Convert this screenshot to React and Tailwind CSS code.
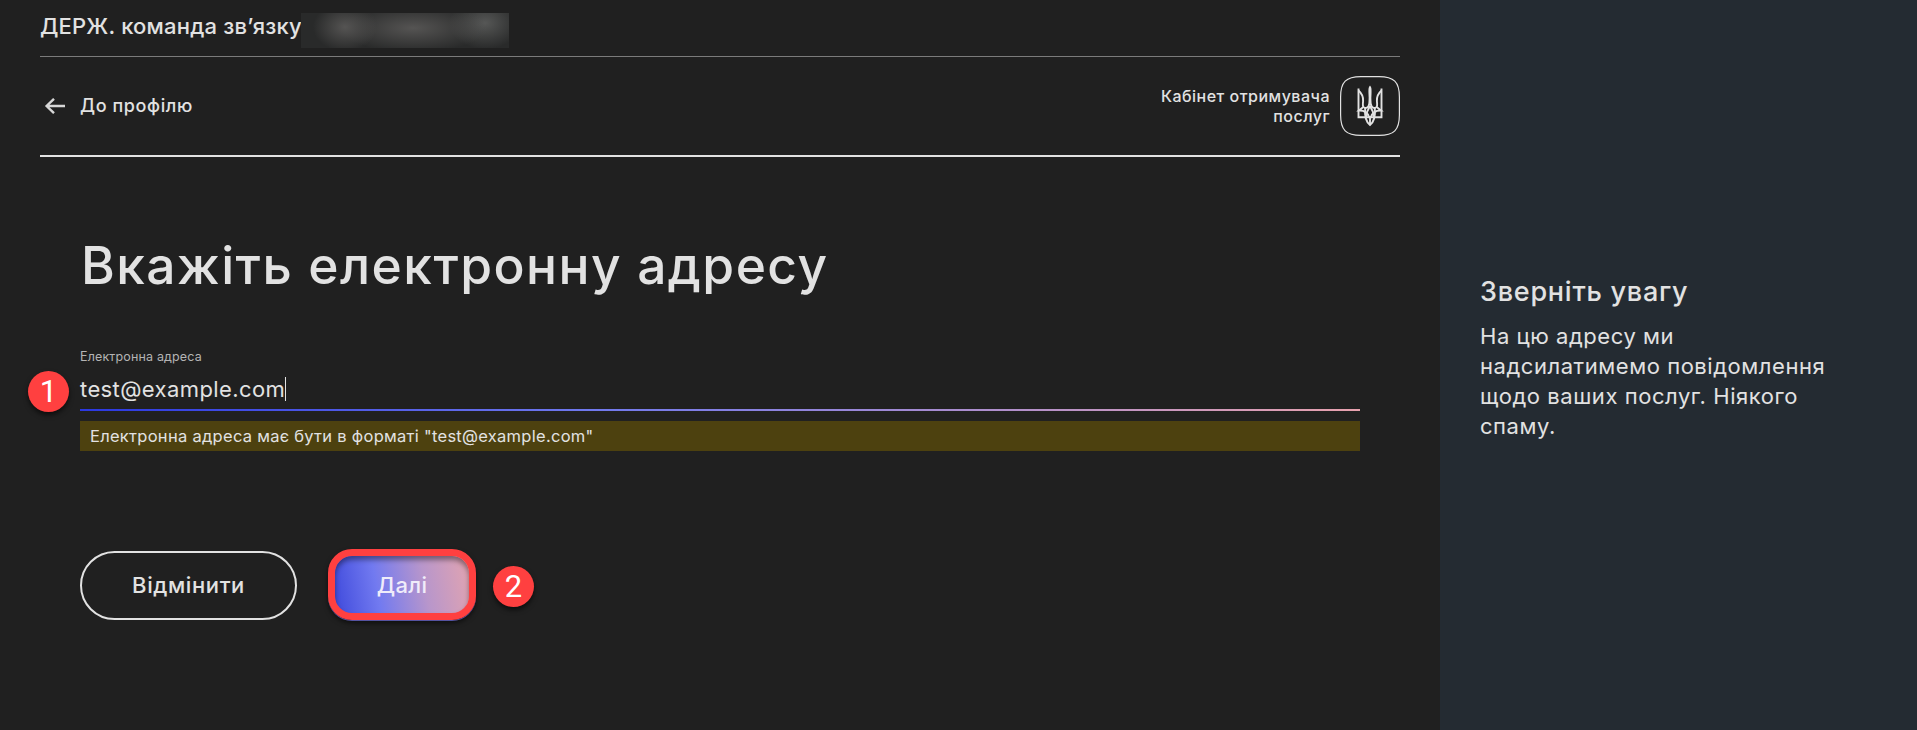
function Badge({ children, className }) {
  return (
    <span className={`flex size-[41px] items-center justify-center rounded-full bg-[#ff4040] font-[Roboto,sans-serif] text-[31px] leading-none tracking-normal text-white shadow-[0px_3px_5px_rgba(0,0,0,0.6)] ${className}`}>
      {children}
    </span>
  );
}

function Trident() {
  return (
    <svg viewBox="0 0 60 60" className="size-[60px]" fill="none" stroke="#e2e2e2">
      <path d="M21 .6H39C54 .6 59.4 6 59.4 21V39C59.4 54 54 59.4 39 59.4H21C6 59.4 .6 54 .6 39V21C.6 6 6 .6 21 .6Z" strokeWidth="1.200" />
      <g strokeWidth="1.900">
        <path d="M18.500 12.500V41.200H41.500V12.500" />
        <path d="M18.500 14.500C22.500 18 23.300 21 23.100 25C23 28 22.200 29.500 23.500 31C24.800 32.500 27.500 32.300 28.600 30C29.600 28 29.700 25 29.900 22" />
        <path d="M41.500 14.500C37.500 18 36.700 21 36.900 25C37 28 37.800 29.500 36.500 31C35.200 32.500 32.500 32.300 31.400 30C30.400 28 30.300 25 30.100 22" />
        <path d="M23.300 31L19 34.500C24 34.300 27.500 36.500 29 41M36.700 31L41 34.500C36 34.300 32.500 36.500 31 41" />
        <path d="M25.200 32C24.500 40 25.500 45.500 30 49C34.500 45.500 35.500 40 34.800 32" />
        <path d="M30 30C27.500 34 26.300 37 26 41M30 30C32.500 34 33.700 37 34 41M30 40V49" />
      </g>
      <path d="M30 9.500C31.800 11 31.600 14 31.500 18L31.100 27H28.900L28.500 18C28.400 14 28.200 11 30 9.500Z" fill="#e2e2e2" stroke="none" />
    </svg>
  );
}

export default function App() {
  return (
    <div className="flex h-[730px] w-[1917px] overflow-hidden bg-[#202020] font-[Inter,sans-serif] text-[#e2e2e2]">
      <main className="flex w-[1440px] flex-col px-10">
        <header className="flex h-[57px] items-start border-b border-[#7b7b7b] pt-[13px]">
          <span className="w-[261px] whitespace-nowrap text-[22px] font-medium leading-[26px] tracking-[0.2px]">ДЕРЖ. команда зв’язку</span>
          <span className="h-[35px] w-[208px] bg-[#292a2a] bg-[radial-gradient(ellipse_32px_24px_at_44px_14px,#555453_0%,transparent_100%),radial-gradient(ellipse_75px_24px_at_112px_15px,#555453_0%,transparent_100%),radial-gradient(ellipse_36px_26px_at_184px_10px,#565756_0%,transparent_100%)]" />
        </header>
        <nav className="flex h-[100px] items-center justify-between border-b-2 border-[#e2e2e2]">
          <a className="flex items-center gap-[15px] text-[18px] font-medium leading-6 tracking-[0.6px]">
            <svg viewBox="0 0 20 16" className="-mr-px ml-1 h-4 w-[22px]" fill="none" stroke="#d6d6d6" strokeWidth="2.400">
              <path d="M9 .8L1.600 8L9 15.200M1.600 8H20" />
            </svg>
            До профілю
          </a>
          <div className="flex items-center gap-2.5">
            <p className="w-[180px] text-right text-[16px] font-medium leading-5 tracking-[0.5px]">Кабінет отримувача послуг</p>
            <Trident />
          </div>
        </nav>
        <section className="flex flex-col px-10">
          <h1 className="mt-[78px] whitespace-nowrap pl-px text-[51.500px] font-medium leading-[60px] tracking-[1.450px]">Вкажіть електронну адресу</h1>
          <label className="mt-[52px] text-[12.5px] leading-5 tracking-[0.15px] text-[#b4b4b4]">Електронна адреса</label>
          <div className="relative flex h-[42px] items-center pt-0.5 text-[22px] leading-7 tracking-[0.4px]">
            <Badge className="absolute -left-[52px] top-[4px]">1</Badge>
            test@example.com
            <span className="h-6 w-px bg-[#e2e2e2]" />
          </div>
          <div className="h-0.5 bg-[linear-gradient(90deg,#2b38e0_0%,#7079ee_40%,#e8a2ae_100%)]" />
          <p className="mt-2.5 h-[30px] bg-[#4d410f] pl-2.5 text-[16.500px] leading-[30px] tracking-[0.28px]">Електронна адреса має бути в форматі "test@example.com"</p>
          <div className="mt-[98px] flex items-center">
            <button className="mt-0.5 h-[69px] w-[217px] rounded-full border-2 border-[#e2e2e2] text-[22px] font-medium tracking-[0.6px]">Відмінити</button>
            <button className="ml-[31px] h-[71px] w-[148px] rounded-[24px] border-[7px] border-[#ff4040] bg-[linear-gradient(80deg,#3f4adc_0%,#727af0_32%,#b896cb_66%,#e2a4b0_100%)] pt-0.5 text-[22px] font-medium tracking-[0.3px] text-[#f0ecfa] shadow-[inset_0_4px_5px_rgba(0,0,0,0.4),0_1px_0_#5553a0,0_3px_5px_rgba(0,0,0,0.6)]">Далі</button>
            <Badge className="ml-[17px] mt-[3px]">2</Badge>
          </div>
        </section>
      </main>
      <aside className="flex-1 bg-[#242b32] px-10 pt-[274px]">
        <h2 className="text-[27px] font-medium leading-9 tracking-[0.75px]">Зверніть увагу</h2>
        <p className="mt-[11px] w-[370px] text-[22px] leading-[30px] tracking-[0.550px]">
          На цю адресу ми<br />надсилатимемо повідомлення<br />щодо ваших послуг. Ніякого<br />спаму.
        </p>
      </aside>
    </div>
  );
}
